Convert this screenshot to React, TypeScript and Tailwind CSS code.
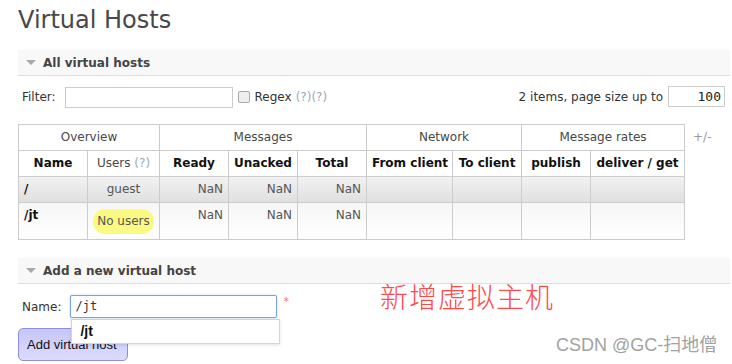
import React from "react";

const rows = [
  { name: "/", users: "guest", tone: "bg-gradient-to-b from-[#f2f2f2] to-[#dfdfdf]", height: "h-[26px]" },
  { name: "/jt", users: null, tone: "bg-gradient-to-b from-[#f6f6f6] to-white", height: "h-[36px]" },
];

const colWidths = ["w-[69px]", "w-[72px]", "w-[69px]", "w-[69px]", "w-[69px]", "w-[86px]", "w-[69px]", "w-[69px]", "w-[94px]"];

const cell = "border border-[#cccccc] px-[5px] py-[5px] leading-[15px]";

const SectionBar = ({ title, className = "" }: { title: string; className?: string }) => (
  <div className={`flex items-center h-[26px] bg-[#f8f8f8] border-b border-[#dddddd] pl-[8px] ${className}`}>
    <svg width="10" height="6" viewBox="0 0 10 6" className="mr-[7px]">
      <polygon points="0,0 10,0 5,5" fill="#a8a8a8" />
    </svg>
    <span className="font-bold text-[12px] text-[#444]">{title}</span>
  </div>
);

const Help = () => <span className="text-[#99a8bb]">(?)</span>;

export default function App() {
  return (
    <div className="relative w-[732px] h-[364px] overflow-hidden bg-white pl-[18px] pr-[2px] font-['DejaVu_Sans',sans-serif] text-[12px] text-[#484848]">
      <h1 className="mt-[6px] text-[24px] leading-[28px] text-[#484848]">Virtual Hosts</h1>

      <SectionBar title="All virtual hosts" className="mt-[16px]" />

      <div className="mt-[10px] flex items-center h-[22px] pl-[4px] pr-[5px]">
        <span className="text-[#333]">Filter:</span>
        <div className="ml-[9px] w-[168px] h-[21px] border border-[#cccccc] bg-white" />
        <div className="ml-[5px] w-[12px] h-[12px] rounded-[2px] border border-[#aaaaaa] bg-[#eeeeee]" />
        <span className="ml-[5px] text-[#333]">Regex</span>
        <span className="ml-[4px]">
          <Help />
          <Help />
        </span>
        <span className="ml-auto text-[#333]">2 items, page size up to</span>
        <div className="ml-[5px] w-[57px] h-[21px] -mt-[2px] border border-[#cccccc] bg-white pr-[3px] text-right font-['DejaVu_Sans_Mono',monospace] text-[13px] leading-[19px] text-[#222]">
          100
        </div>
      </div>

      <div className="mt-[16px] flex items-start">
        <table className="border-collapse table-fixed w-[666px]">
          <colgroup>
            {colWidths.map((w, i) => (
              <col key={i} className={w} />
            ))}
          </colgroup>
          <thead>
            <tr>
              <th colSpan={2} className={`${cell} font-normal text-center text-[#484848]`}>Overview</th>
              <th colSpan={3} className={`${cell} font-normal text-center text-[#484848]`}>Messages</th>
              <th colSpan={2} className={`${cell} font-normal text-center text-[#484848]`}>Network</th>
              <th colSpan={2} className={`${cell} font-normal text-center text-[#484848]`}>Message rates</th>
            </tr>
            <tr className="text-[#111]">
              <th className={`${cell} text-center`}>Name</th>
              <th className={`${cell} font-normal text-center text-[#484848]`}>
                Users <Help />
              </th>
              <th className={`${cell} text-center`}>Ready</th>
              <th className={`${cell} text-center`}>Unacked</th>
              <th className={`${cell} text-center`}>Total</th>
              <th className={`${cell} text-center whitespace-nowrap px-[3px]`}>From client</th>
              <th className={`${cell} text-center whitespace-nowrap px-[3px]`}>To client</th>
              <th className={`${cell} text-center`}>publish</th>
              <th className={`${cell} text-center whitespace-nowrap px-[3px]`}>deliver / get</th>
            </tr>
          </thead>
          <tbody>
            {rows.map((r) => (
              <tr key={r.name} className={`${r.tone} ${r.height} align-top`}>
                <td className={`${cell} font-bold text-[#111]`}>{r.name}</td>
                <td className={`${cell} text-center text-[#555] whitespace-nowrap ${r.users ? "" : "px-[2px]"}`}>
                  {r.users ?? (
                    <span className="inline-block mt-[1px] px-[4px] py-[5px] leading-[15px] rounded-[12px] bg-[#fafa82]">
                      No users
                    </span>
                  )}
                </td>
                <td className={`${cell} text-right text-[#555]`}>NaN</td>
                <td className={`${cell} text-right text-[#555]`}>NaN</td>
                <td className={`${cell} text-right text-[#555]`}>NaN</td>
                <td className={cell} />
                <td className={cell} />
                <td className={cell} />
                <td className={cell} />
              </tr>
            ))}
          </tbody>
        </table>
        <span className="ml-[8px] mt-[6px] leading-[15px] text-[#999]">+/-</span>
      </div>

      <SectionBar title="Add a new virtual host" className="mt-[18px]" />

      <div className="mt-[11px] flex items-center h-[23px] pl-[4px]">
        <span className="text-[#333]">Name:</span>
        <div className="relative ml-[9px]">
          <div className="w-[207px] h-[23px] border border-[#76a3e6] rounded-[2px] bg-white pl-[4px] font-['DejaVu_Sans_Mono',monospace] text-[12px] leading-[21px] text-[#333] shadow-[0_0_2px_#a8c8f4]">
            /jt
          </div>
          <div className="absolute left-[1px] top-[24px] z-10 w-[209px] h-[25px] border border-[#d4d4d4] bg-white pl-[8px] font-['Liberation_Sans',sans-serif] text-[14px] font-bold leading-[23px] text-[#111] shadow-[0_1px_3px_rgba(0,0,0,0.12)]">
            /jt
          </div>
        </div>
        <span className="ml-[6px] -mt-[8px] text-[11px] text-[#f07070]">*</span>
      </div>

      <button className="mt-[10px] w-[110px] h-[33px] rounded-[5px] border border-[#8e8ee0] bg-gradient-to-b from-[#c6c6f8] to-[#dcdcff] pl-[8px] text-left font-['Liberation_Sans',sans-serif] text-[13px] text-[#111]">
        Add virtual host
      </button>

      <div className="absolute left-[380px] top-[280px] font-['Noto_Sans_CJK_SC',sans-serif] text-[28px] leading-[32px] tracking-[1px] text-[#ff4a4a] font-light">
        新增虚拟主机
      </div>

      <div className="absolute left-[556px] top-[333px] font-['Liberation_Sans','Noto_Sans_CJK_SC',sans-serif] text-[18px] leading-[24px] text-[#a2a2a2]">
        CSDN @GC-扫地僧
      </div>
    </div>
  );
}
